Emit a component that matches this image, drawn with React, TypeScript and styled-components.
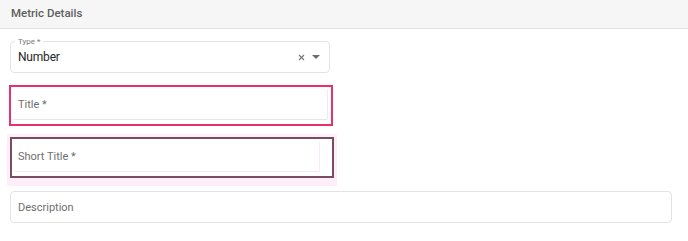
import styled, { createGlobalStyle } from "styled-components";

const GlobalStyle = createGlobalStyle`
  body {
    margin: 0;
    background: #ffffff;
    font-family: Roboto, "Liberation Sans", sans-serif;
  }
`;

const Panel = styled.div`
  width: 688px;
  height: 241px;
  overflow: hidden;
  background: #ffffff;
`;

const Header = styled.div`
  height: 29px;
  display: flex;
  align-items: center;
  padding-left: 11px;
  padding-bottom: 3px;
  box-sizing: border-box;
  background: #f6f6f6;
  border-bottom: 1px solid #e2e2e2;
  font-size: 11.5px;
  font-weight: 500;
  color: #5e5e5e;
`;

const Body = styled.div`
  display: flex;
  flex-direction: column;
  padding: 12px 0 0 10px;
`;

const Outlined = styled.div<{ $width: number }>`
  position: relative;
  width: ${({ $width }) => $width}px;
  height: 32px;
  box-sizing: border-box;
  display: flex;
  align-items: center;
  padding-left: 7px;
  border: 1px solid #e3e3e3;
  border-radius: 4px;
  background: #ffffff;
`;

const FloatLabel = styled.span`
  position: absolute;
  top: -5px;
  left: 4px;
  padding: 0 3px;
  background: #ffffff;
  font-size: 8px;
  line-height: 9px;
  color: #7a7a7a;
`;

const Value = styled.span`
  font-size: 12px;
  letter-spacing: -0.2px;
  color: #262626;
  flex: 1;
`;

const Placeholder = styled.span`
  font-size: 11px;
  color: #6f6f6f;
`;

const Adornments = styled.div`
  display: flex;
  align-items: center;
  gap: 7px;
  padding-right: 9px;
  color: #767676;
`;

const Highlight = styled.div<{ $tone: "error" | "focus" }>`
  width: 324px;
  height: 41px;
  box-sizing: border-box;
  padding: 2px 3px 4px 2px;
  margin-left: ${({ $tone }) => ($tone === "error" ? "-1px" : "0")};
  margin-top: ${({ $tone }) => ($tone === "error" ? "12px" : "11px")};
  border: 2px solid ${({ $tone }) => ($tone === "error" ? "#e8306a" : "#7d4b5e")};
  background: #ffffff;
  box-shadow: ${({ $tone }) =>
    $tone === "focus" ? "0 0 0 3px #fdeefa, 0 5px 0 3px #fdeefa" : "none"};
`;

const InnerField = styled.div<{ $tone: "error" | "focus" }>`
  height: 100%;
  box-sizing: border-box;
  display: flex;
  align-items: center;
  padding-left: ${({ $tone }) => ($tone === "focus" ? "4px" : "5px")};
  border-bottom: 1px solid ${({ $tone }) => ($tone === "error" ? "#e6e6e6" : "#f6e6f2")};
  border-right: 1px solid ${({ $tone }) => ($tone === "error" ? "#ececec" : "#fbe8f6")};
  border-radius: 2px;
  margin-right: ${({ $tone }) => ($tone === "focus" ? "9px" : "0")};
`;

const DescriptionWrap = styled.div`
  margin-top: 13px;
`;

const Caret = () => (
  <svg width="8" height="4" viewBox="0 0 8 4">
    <path d="M0 0h8L4 4z" fill="#6d6d6d" />
  </svg>
);

const Cross = () => (
  <svg width="7" height="7" viewBox="0 0 7 7">
    <path d="M1 1l5 5M6 1L1 6" stroke="#7a7a7a" strokeWidth="1.2" />
  </svg>
);

export default function App() {
  return (
    <>
      <GlobalStyle />
      <Panel>
        <Header>Metric Details</Header>
        <Body>
          <Outlined $width={320}>
            <FloatLabel>Type *</FloatLabel>
            <Value>Number</Value>
            <Adornments>
              <Cross />
              <Caret />
            </Adornments>
          </Outlined>
          <Highlight $tone="error">
            <InnerField $tone="error">
              <Placeholder>Title *</Placeholder>
            </InnerField>
          </Highlight>
          <Highlight $tone="focus">
            <InnerField $tone="focus">
              <Placeholder>Short Title *</Placeholder>
            </InnerField>
          </Highlight>
          <DescriptionWrap>
            <Outlined $width={662}>
              <Placeholder>Description</Placeholder>
            </Outlined>
          </DescriptionWrap>
        </Body>
      </Panel>
    </>
  );
}
